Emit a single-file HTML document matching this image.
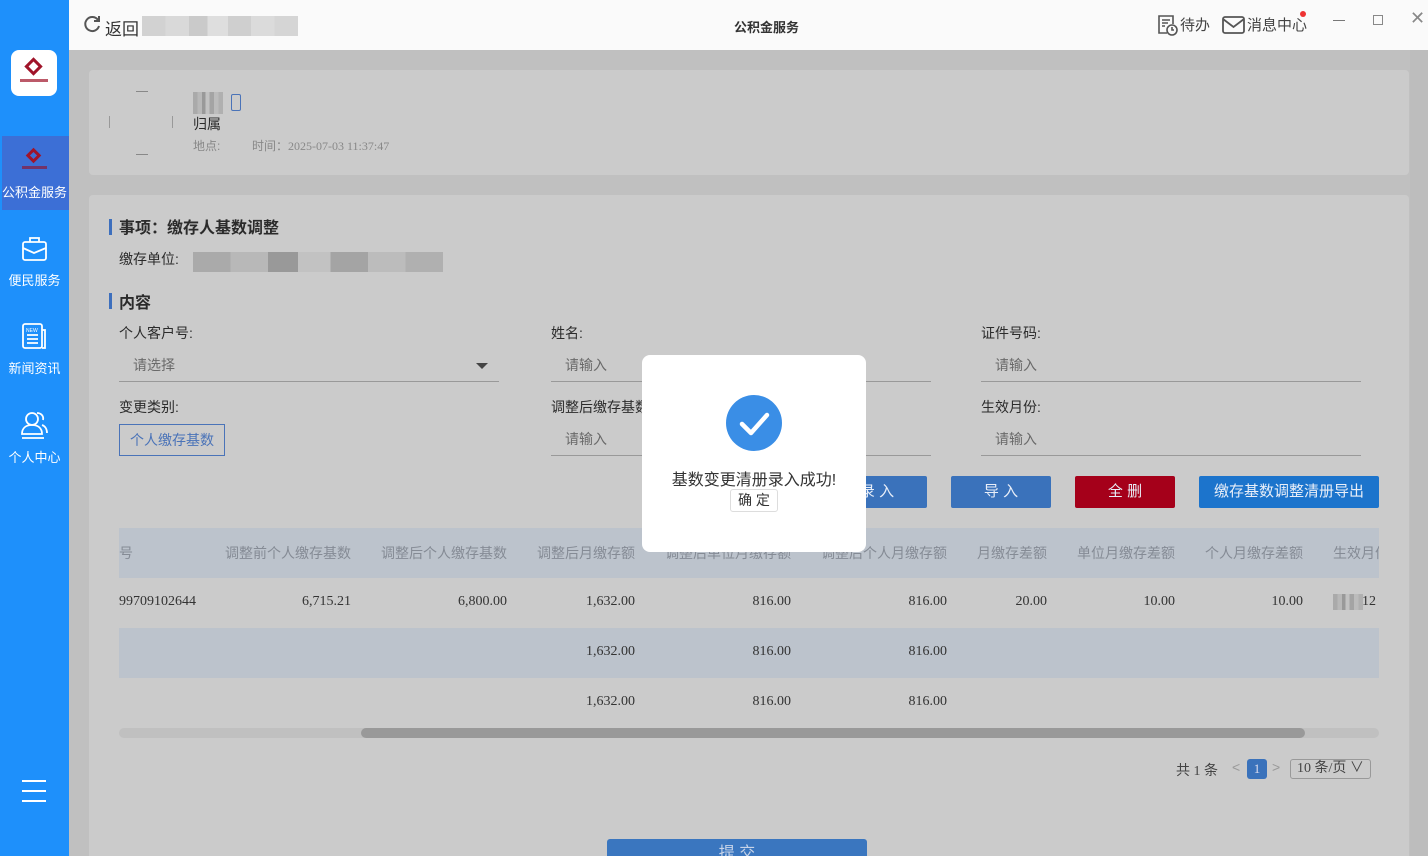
<!DOCTYPE html>
<html><head><meta charset="utf-8"><style>
*{margin:0;padding:0;box-sizing:border-box}
html,body{width:1428px;height:856px;overflow:hidden}
body{position:relative;background:#c0c0c0;font-family:"Liberation Sans","Noto Sans CJK SC",sans-serif;color:#2b2b2b}
.a{position:absolute}
.side{left:0;top:0;width:69px;height:856px;background:#1e90fb}
.nav{left:0;width:69px;text-align:center;color:#fff;font-size:13px}
.top{left:69px;top:0;width:1359px;height:50px;background:#fafafa}
.panel{background:#cbcbcb;border-radius:4px}
.blur{background:linear-gradient(90deg,#aaa 0 15%,#b8b8b8 15% 30%,#999 30% 42%,#c2c2c2 42% 55%,#a4a4a4 55% 70%,#bcbcbc 70% 85%,#b0b0b0 85%)}
.lbl{font-size:14px;color:#2b2b2b}
.inp{font-size:14px;color:#6a6a6a;border-bottom:1px solid #999;height:30px;padding-left:14px;line-height:26px}
.btn{color:#e8eef8;font-size:15px;text-align:center;line-height:32px;height:32px;border-radius:2px}
.th{font-size:14px;color:#858b95;top:543px;text-align:right}
.td{font-family:"Liberation Serif",serif;font-size:14px;color:#333;text-align:right}
</style></head><body>
<div class="a side"></div>
<div class="a" style="left:11px;top:50px;width:46px;height:46px;background:#fff;border-radius:8px">
<div class="a" style="left:16px;top:10px;width:13px;height:13px;border:3px solid #a0142a;transform:rotate(45deg)"></div>
<div class="a" style="left:9px;top:29px;width:28px;height:3px;background:#a0142a;opacity:.7"></div></div>
<div class="a" style="left:2px;top:136px;width:67px;height:74px;background:#3c6fd6"></div>
<div class="a" style="left:28px;top:150px;width:11px;height:11px;border:3px solid #a0142a;transform:rotate(45deg)"></div>
<div class="a" style="left:22px;top:166px;width:25px;height:3px;background:#8a1a3a;opacity:.7"></div>
<div class="a nav" style="top:182px">公积金服务</div>
<svg class="a" style="left:21px;top:236px" width="27" height="26" viewBox="0 0 27 26" fill="none" stroke="#fff" stroke-width="1.8"><rect x="2" y="6" width="23" height="18" rx="2"/><path d="M9 6V2h9v4M2 12l11 5 12-5"/></svg>
<div class="a nav" style="top:270px">便民服务</div>
<svg class="a" style="left:21px;top:322px" width="27" height="28" viewBox="0 0 27 28" fill="none" stroke="#fff" stroke-width="1.8"><rect x="2" y="2" width="19" height="24" rx="2"/><path d="M21 8h3v18h-3M6 13h11M6 17h11M6 21h11"/><text x="5" y="10" font-size="5" fill="#fff" stroke="none">NEW</text></svg>
<div class="a nav" style="top:358px">新闻资讯</div>
<svg class="a" style="left:20px;top:410px" width="29" height="30" viewBox="0 0 29 30" fill="none" stroke="#fff" stroke-width="1.8"><circle cx="12" cy="9" r="6"/><path d="M2 24c0-6 4-9 10-9s10 3 10 9zM17 3c4 0 7 3 6 7M22 15c3 1 5 4 5 8M2 28h22"/></svg>
<div class="a nav" style="top:447px">个人中心</div>
<div class="a" style="left:22px;top:780px;width:24px;height:2px;background:#fff;box-shadow:0 10px 0 #fff,0 20px 0 #fff"></div>

<div class="a top"></div>
<svg class="a" style="left:83px;top:15px" width="18" height="18" viewBox="0 0 18 18" fill="none" stroke="#555" stroke-width="2"><path d="M15 5A7 7 0 1 0 16 11"/><path d="M16 1v5h-5" /></svg>
<div class="a" style="left:105px;top:15px;font-size:17px;color:#333">返回</div>
<div class="a blur" style="left:142px;top:16px;width:156px;height:20px;opacity:.5"></div>
<div class="a" style="left:734px;top:17px;font-size:13px;font-weight:bold;color:#333">公积金服务</div>
<svg class="a" style="left:1157px;top:14px" width="22" height="22" viewBox="0 0 22 22" fill="none" stroke="#555" stroke-width="1.6"><path d="M10 19H2V2h14v8M5 6h8M5 9h6M5 12h3"/><circle cx="15" cy="16" r="5"/><path d="M15 13v3h2"/></svg>
<div class="a" style="left:1180px;top:14px;font-size:15px;color:#444">待办</div>
<svg class="a" style="left:1222px;top:15px" width="24" height="20" viewBox="0 0 24 20" fill="none" stroke="#555" stroke-width="1.8"><rect x="1" y="2" width="21" height="16" rx="2"/><path d="M1 4l10.5 8L22 4"/></svg>
<div class="a" style="left:1247px;top:14px;font-size:15px;color:#444">消息中心</div>
<div class="a" style="left:1300px;top:11px;width:6px;height:6px;border-radius:50%;background:#e33"></div>
<div class="a" style="left:1333px;top:20px;width:12px;height:1px;background:#777"></div>
<div class="a" style="left:1373px;top:15px;width:10px;height:10px;border:1px solid #888"></div>
<div class="a" style="left:1410px;top:8px;font-size:18px;color:#888">✕</div>

<div class="a panel" style="left:89px;top:70px;width:1320px;height:105px"></div>
<div class="a" style="left:136px;top:91px;width:12px;height:1px;background:#888"></div>
<div class="a" style="left:136px;top:154px;width:12px;height:1px;background:#888"></div>
<div class="a" style="left:109px;top:116px;width:1px;height:12px;background:#999"></div>
<div class="a" style="left:172px;top:116px;width:1px;height:12px;background:#999"></div>
<div class="a blur" style="left:193px;top:92px;width:30px;height:22px"></div>
<div class="a" style="left:231px;top:94px;width:10px;height:17px;border:1.5px solid #4a73b8;border-radius:2px"></div>
<div class="a" style="left:193px;top:114px;font-size:14px">归属</div>
<div class="a" style="left:193px;top:137px;font-size:12px;color:#888">地点:</div>
<div class="a" style="left:252px;top:137px;font-size:12px;color:#888;font-family:'Liberation Serif','Noto Sans CJK SC',serif">时间：2025-07-03 11:37:47</div>

<div class="a panel" style="left:89px;top:195px;width:1320px;height:661px;border-radius:4px 4px 0 0"></div>
<div class="a" style="left:1410px;top:50px;width:18px;height:806px;background:#bdbdbd"></div>
<div class="a" style="left:109px;top:219px;width:3px;height:16px;background:#3d6fbd"></div>
<div class="a" style="left:119px;top:214px;font-size:16px;font-weight:bold">事项：缴存人基数调整</div>
<div class="a lbl" style="left:119px;top:249px">缴存单位:</div>
<div class="a blur" style="left:193px;top:252px;width:250px;height:20px"></div>
<div class="a" style="left:109px;top:293px;width:3px;height:16px;background:#3d6fbd"></div>
<div class="a" style="left:119px;top:289px;font-size:16px;font-weight:bold">内容</div>

<div class="a lbl" style="left:119px;top:323px">个人客户号:</div>
<div class="a inp" style="left:119px;top:352px;width:380px">请选择</div>
<div class="a" style="left:476px;top:363px;border:6px solid transparent;border-top:6px solid #444"></div>
<div class="a lbl" style="left:551px;top:323px">姓名:</div>
<div class="a inp" style="left:551px;top:352px;width:380px">请输入</div>
<div class="a lbl" style="left:981px;top:323px">证件号码:</div>
<div class="a inp" style="left:981px;top:352px;width:380px">请输入</div>
<div class="a lbl" style="left:119px;top:397px">变更类别:</div>
<div class="a" style="left:119px;top:424px;width:106px;height:32px;border:1px solid #4a73b8;font-size:14px;color:#4a73b8;text-align:center;line-height:30px">个人缴存基数</div>
<div class="a lbl" style="left:551px;top:397px">调整后缴存基数:</div>
<div class="a inp" style="left:551px;top:426px;width:380px">请输入</div>
<div class="a lbl" style="left:981px;top:397px">生效月份:</div>
<div class="a inp" style="left:981px;top:426px;width:380px">请输入</div>

<div class="a btn" style="left:827px;top:476px;width:100px;background:#3a72bb">录 入</div>
<div class="a btn" style="left:951px;top:476px;width:100px;background:#3a72bb">导 入</div>
<div class="a btn" style="left:1075px;top:476px;width:100px;background:#a5001a">全 删</div>
<div class="a btn" style="left:1199px;top:476px;width:180px;background:#1c74cc">缴存基数调整清册导出</div>

<div class="a" style="left:119px;top:528px;width:1260px;height:50px;background:#bcc3cc"></div>
<div class="a" style="left:119px;top:628px;width:1260px;height:50px;background:#bcc3cc"></div>
<div class="a th" style="left:119px;text-align:left">号</div>
<div class="a th" style="left:200px;width:151px">调整前个人缴存基数</div>
<div class="a th" style="left:356px;width:151px">调整后个人缴存基数</div>
<div class="a th" style="left:512px;width:123px">调整后月缴存额</div>
<div class="a th" style="left:640px;width:151px">调整后单位月缴存额</div>
<div class="a th" style="left:796px;width:151px">调整后个人月缴存额</div>
<div class="a th" style="left:952px;width:95px">月缴存差额</div>
<div class="a th" style="left:1052px;width:123px">单位月缴存差额</div>
<div class="a th" style="left:1180px;width:123px">个人月缴存差额</div>
<div class="a th" style="left:1333px;text-align:left;width:46px;overflow:hidden;white-space:nowrap">生效月份</div>

<div class="a td" style="left:119px;top:594px;text-align:left">99709102644</div>
<div class="a td" style="left:200px;top:594px;width:151px">6,715.21</div>
<div class="a td" style="left:356px;top:594px;width:151px">6,800.00</div>
<div class="a td" style="left:512px;top:594px;width:123px">1,632.00</div>
<div class="a td" style="left:640px;top:594px;width:151px">816.00</div>
<div class="a td" style="left:796px;top:594px;width:151px">816.00</div>
<div class="a td" style="left:952px;top:594px;width:95px">20.00</div>
<div class="a td" style="left:1052px;top:594px;width:123px">10.00</div>
<div class="a td" style="left:1180px;top:594px;width:123px">10.00</div>
<div class="a blur" style="left:1333px;top:594px;width:30px;height:16px"></div>
<div class="a td" style="left:1362px;top:594px;text-align:left">12</div>
<div class="a td" style="left:512px;top:644px;width:123px">1,632.00</div>
<div class="a td" style="left:640px;top:644px;width:151px">816.00</div>
<div class="a td" style="left:796px;top:644px;width:151px">816.00</div>
<div class="a td" style="left:512px;top:694px;width:123px">1,632.00</div>
<div class="a td" style="left:640px;top:694px;width:151px">816.00</div>
<div class="a td" style="left:796px;top:694px;width:151px">816.00</div>

<div class="a" style="left:119px;top:728px;width:1260px;height:10px;background:#c0c0c0;border-radius:5px"></div>
<div class="a" style="left:361px;top:728px;width:944px;height:10px;background:#999;border-radius:5px"></div>

<div class="a" style="left:1176px;top:760px;font-size:14px;font-family:'Liberation Serif','Noto Sans CJK SC',serif;color:#444">共 1 条</div>
<div class="a" style="left:1232px;top:759px;font-size:14px;color:#999">&lt;</div>
<div class="a" style="left:1247px;top:759px;width:20px;height:20px;background:#3a72bb;border-radius:3px;color:#dde;font-size:13px;text-align:center;line-height:20px;font-family:'Liberation Serif',serif">1</div>
<div class="a" style="left:1272px;top:759px;font-size:14px;color:#999">&gt;</div>
<div class="a" style="left:1290px;top:759px;width:81px;height:20px;border:1px solid #999;border-radius:3px;font-size:14px;line-height:18px;padding-left:6px;color:#444;font-family:'Liberation Serif','Noto Sans CJK SC',serif">10 条/页 ∨</div>

<div class="a" style="left:607px;top:839px;width:260px;height:30px;background:#3a76bf;border-radius:3px;color:#c8d4e8;text-align:center;font-size:16px;line-height:30px">提 交</div>

<div class="a" style="left:642px;top:355px;width:224px;height:197px;background:#fff;border-radius:8px"></div>
<div class="a" style="left:726px;top:395px;width:56px;height:56px;border-radius:50%;background:#3a8ee6"></div>
<svg class="a" style="left:726px;top:395px" width="56" height="56" viewBox="0 0 56 56"><path d="M16 29l9 9 16-18" fill="none" stroke="#fff" stroke-width="4.5" stroke-linecap="round" stroke-linejoin="round"/></svg>
<div class="a" style="left:642px;top:466px;width:224px;text-align:center;font-size:16px;color:#333">基数变更清册录入成功!</div>
<div class="a" style="left:730px;top:489px;width:48px;height:23px;border:1px solid #ddd;border-radius:3px;font-size:14px;text-align:center;line-height:21px;color:#333">确 定</div>
</body></html>
